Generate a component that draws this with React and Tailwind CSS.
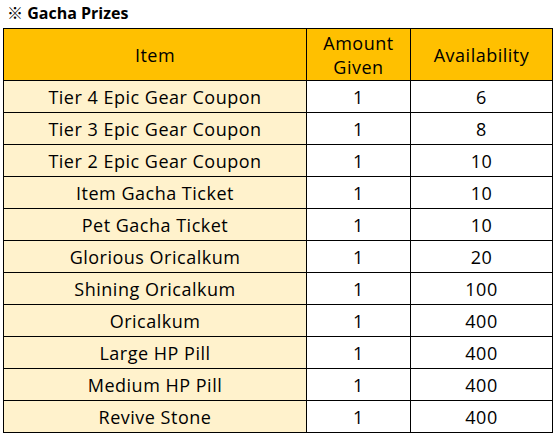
const prizes = [
    ["Tier 4 Epic Gear Coupon", "1", "6"],
    ["Tier 3 Epic Gear Coupon", "1", "8"],
    ["Tier 2 Epic Gear Coupon", "1", "10"],
    ["Item Gacha Ticket", "1", "10"],
    ["Pet Gacha Ticket", "1", "10"],
    ["Glorious Oricalkum", "1", "20"],
    ["Shining Oricalkum", "1", "100"],
    ["Oricalkum", "1", "400"],
    ["Large HP Pill", "1", "400"],
    ["Medium HP Pill", "1", "400"],
    ["Revive Stone", "1", "400"],
];

const App = () => {
    return (
        <div className="w-[559px] h-[441px] bg-white text-black font-['Open_Sans','Noto_Sans_CJK_KR',sans-serif]">

            {/* TITULO */}

            <div className="h-[28px] pl-[7px] pt-[3px] text-[16px] font-bold leading-[20px]">
                ※ Gacha Prizes
            </div>

            {/* TABLA */}

            <table className="ml-[3px] w-[549px] border-collapse table-fixed text-[18px] tracking-[0.5px]">
                <colgroup>
                    <col className="w-[303px]" />
                    <col className="w-[104px]" />
                    <col className="w-[142px]" />
                </colgroup>
                <thead>
                    <tr className="h-[52px] bg-[#FFC000]">
                        <th className="border border-black font-normal leading-[24px] p-0">Item</th>
                        <th className="border border-black font-normal leading-[24px] p-0">
                            <div>Amount</div>
                            <div>Given</div>
                        </th>
                        <th className="border border-black font-normal leading-[24px] p-0">Availability</th>
                    </tr>
                </thead>
                <tbody>
                    {prizes.map((p, index) => (
                        <tr key={index} className="h-[32px]">
                            <td className="border border-black bg-[#FFF2CC] text-center leading-[20px] p-0">{p[0]}</td>
                            <td className="border border-black text-center leading-[20px] p-0">{p[1]}</td>
                            <td className="border border-black text-center leading-[20px] p-0">{p[2]}</td>
                        </tr>
                    ))}
                </tbody>
            </table>

        </div>
    );
};

export default App;
